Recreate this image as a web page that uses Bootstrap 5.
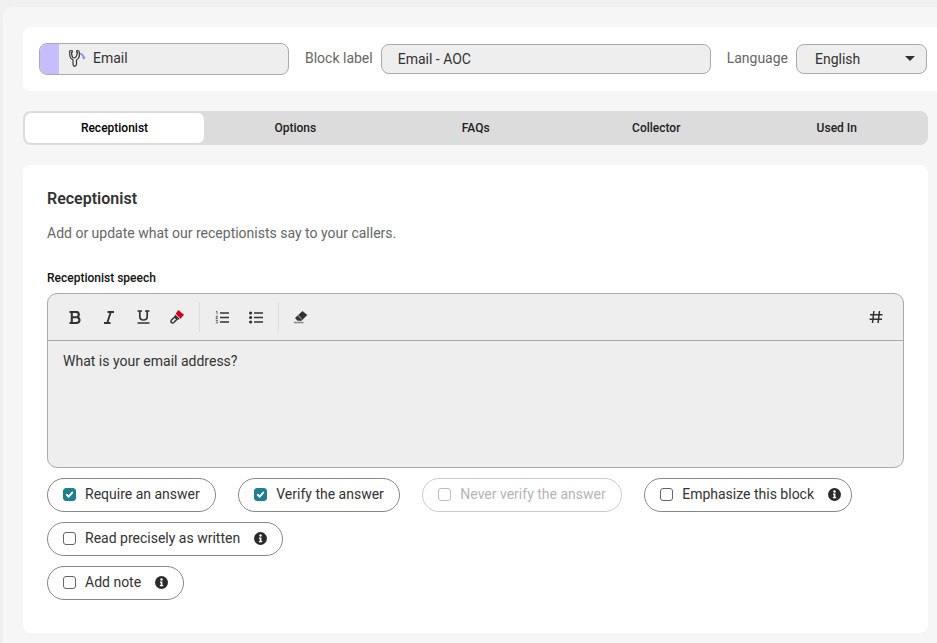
<!DOCTYPE html>
<html lang="en">
<head>
<meta charset="utf-8">
<title>Email block</title>
<link href="https://cdn.jsdelivr.net/npm/bootstrap@5.3.0/dist/css/bootstrap.min.css" rel="stylesheet">
<style>
html,body{height:100%;overflow:hidden}
body{background:#f0f0f0;font-family:Roboto,"Liberation Sans",sans-serif;font-size:14px;color:#333}
.shell{margin:7px 0 0 3px;padding:20px 9px 10px 20px;background:#f6f6f6;border-top-left-radius:10px;height:636px}
.head-panel{background:#fff;border-radius:8px 0 0 8px;height:64px;padding:0 10px 0 16px;margin-right:-9px}
.type-pill{width:250px;height:32px;background:#eee;border:1px solid #aaa;border-radius:8px;overflow:hidden}
.type-swatch{width:20px;height:100%;background:#c6bdfb;margin-left:-1px}
.type-icon{margin:0 7px 2px 9px}
.type-name{margin-bottom:2px}
.field-label{color:#666;margin:0 8px 2px 16px}
.text-box{height:30px;background:#eee;border:1px solid #aaa;border-radius:8px;padding:0 16px;display:flex;align-items:center;color:#333;font-size:14px}
.name-box{width:330px}
.lang-box{width:131px;position:relative;padding-left:18px}
.lang-caret{position:absolute;right:11px;top:11px;width:0;height:0;border:5px solid transparent;border-top:5px solid #333;border-bottom:0}
.tab-strip{height:34px;margin-top:20px;background:#dcdcdc;border-radius:8px;padding:2px 1px 2px 2px}
.tab-item{flex:1 1 0;border:0;background:transparent;border-radius:6px;font-size:12px;font-weight:500;color:#222;padding:0;line-height:1}
.tab-item.on{flex:none;width:179px;margin-right:1px;background:#fff;color:#000}
.main-panel{background:#fff;border-radius:8px;margin-top:20px;height:468px;padding:24px}
.main-title{font-size:16px;font-weight:600;color:#333;line-height:19px;margin:0}
.main-sub{color:#666;line-height:20px;margin:15px 0 0}
.speech-label{font-size:12px;font-weight:500;color:#111;line-height:14px;margin:28px 0 8px;display:block}
.editor{height:175px;background:#eee;border:1px solid #aaa;border-radius:10px;overflow:hidden}
.editor-bar{height:47px;border-bottom:1px solid #aaa;padding:0 10px}
.tool{width:34px;height:30px;border:0;background:transparent;padding:0;display:flex;align-items:center;justify-content:center;color:#333}
.tool-sep{width:1px;height:30px;background:#ddd;margin:0 5px}
.editor-text{padding:10px 15px;line-height:20px;color:#333}
.pill-row{margin-top:10px;column-gap:22.5px}
.pills{margin-top:10px}
.pills .pill-row:first-child{margin-top:0}
.opt-pill{height:34px;border:1px solid #888;border-radius:17px;padding:0 15px 2px;display:inline-flex;align-items:center;color:#333;margin:0}
.opt-pill.tight{padding-right:10px}
.opt-pill .form-check-input{width:13px;height:13px;margin:0 9px 0 0;border:1px solid #666;border-radius:3px;flex:none;float:none}
.opt-pill .form-check-input:checked{border-color:#1f7f90;background-color:#1f7f90;background-image:url("data:image/svg+xml,%3csvg xmlns='http://www.w3.org/2000/svg' viewBox='0 0 20 20'%3e%3cpath fill='none' stroke='%23fff' stroke-linecap='round' stroke-linejoin='round' stroke-width='3.500' d='m5 10.500 3.500 3.500 6.500-7.500'/%3e%3c/svg%3e")}
.opt-pill.off{border-color:#ccc;color:#b5b5b5}
.opt-pill.off .form-check-input{border-color:#bbb;opacity:1;background-color:#fff}
.info-dot{margin-left:14px;flex:none}
</style>
</head>
<body>
<div class="shell">
  <div class="head-panel d-flex align-items-center">
    <div class="type-pill d-flex align-items-center">
      <span class="type-swatch"></span>
      <svg class="type-icon" width="18" height="18" viewBox="0 0 18 18" fill="none"><path d="M11.500 4.500c2.300.4 3.900 2 4.300 4.300" stroke="#8f86e6" stroke-width="1.700"/><path d="M17.600 7.800l-1.500 3-2.200-2.200z" fill="#8f86e6"/><path d="M1.500 2 4 1.500l.5 1.500-1 .5.500 3.500q.5 2 2 2t2.500-2l1-3.500-1-.5.500-1.500 2 .5q1 5-.5 7-1 1.500-2 2v4q0 2-2 2.300-1.500-.3-1.500-2.300v-4.200Q2.500 10 2 7.500z" stroke="#333" stroke-width="1.200" stroke-linejoin="round"/></svg>
      <span class="type-name">Email</span>
    </div>
    <span class="field-label">Block label</span>
    <div class="text-box name-box">Email - AOC</div>
    <span class="field-label">Language</span>
    <div class="text-box lang-box">English<span class="lang-caret"></span></div>
  </div>

  <div class="tab-strip d-flex">
    <button type="button" class="tab-item on">Receptionist</button>
    <button type="button" class="tab-item">Options</button>
    <button type="button" class="tab-item">FAQs</button>
    <button type="button" class="tab-item">Collector</button>
    <button type="button" class="tab-item">Used In</button>
  </div>

  <div class="main-panel">
    <h2 class="main-title">Receptionist</h2>
    <p class="main-sub">Add or update what our receptionists say to your callers.</p>
    <span class="speech-label">Receptionist speech</span>
    <div class="editor">
      <div class="editor-bar d-flex align-items-center">
        <button type="button" class="tool" aria-label="Bold"><svg width="12" height="13" viewBox="0 0 12 13" fill="none"><path d="M.5 1H7c1.800 0 2.800 1 2.800 2.600 0 1.400-.8 2.400-2.300 2.600 1.800.1 3 1.100 3 2.900 0 1.900-1.300 2.900-3.300 2.900H.5M2.800 1v11M2.800 6.300h4.500" stroke="#333" stroke-width="2.100"/></svg></button>
        <button type="button" class="tool" aria-label="Italic"><svg width="12" height="13" viewBox="0 0 12 13" fill="none"><path d="M4.500 1h6.500M1 12h6.500M7.800 1 4.200 12" stroke="#333" stroke-width="1.900"/></svg></button>
        <button type="button" class="tool" aria-label="Underline"><svg width="13" height="14" viewBox="0 0 13 14" fill="none"><path d="M.5 1h4.500M8 1h4.500M2.800 1v5.500C2.800 8.700 4.300 10 6.500 10s3.700-1.300 3.700-3.500V1M.5 13h12" stroke="#333" stroke-width="1.700"/></svg></button>
        <button type="button" class="tool" aria-label="Highlight"><svg width="14" height="14" viewBox="0 0 14 14"><path d="M8.300 0 14 4.800 10.500 8.800 5.700 3.700z" fill="#d0021b"/><path d="M5.400 4.500 9.700 9 8.300 9.800 4.500 6z" fill="#333"/><path d="M4.700 7 7 9.300 3.800 12.500A1.500 1.500 0 0 1 1.500 10z" fill="none" stroke="#333" stroke-width="1.500"/></svg></button>
        <span class="tool-sep"></span>
        <button type="button" class="tool" aria-label="Ordered list"><svg width="14" height="13" viewBox="0 0 14 13" fill="none"><path d="M5 2h9M5 6.500h9M5 11h9" stroke="#333" stroke-width="1.300"/><path d="M1 .7l1-.4v3M.8 5.300h1.800L.9 7.500h1.900M.8 9.300h1.900l-.9 1 .9.900-.2.800H.8" stroke="#333" stroke-width=".7"/></svg></button>
        <button type="button" class="tool" aria-label="Bullet list"><svg width="14" height="13" viewBox="0 0 14 13"><circle cx="1.600" cy="2" r="1.600" fill="#333"/><circle cx="1.600" cy="6.500" r="1.600" fill="#333"/><circle cx="1.600" cy="11" r="1.600" fill="#333"/><path d="M5 2h9M5 6.500h9M5 11h9" stroke="#333" stroke-width="1.500"/></svg></button>
        <span class="tool-sep"></span>
        <button type="button" class="tool" aria-label="Clear formatting"><svg width="14" height="14" viewBox="0 0 14 14"><path d="M8.500 1 13.300 5 7.500 10.800H3.500L1 8z" fill="#333"/><path d="M0 12.500h9.500" stroke="#888" stroke-width="1.300"/><path d="M4 5.500 7.700 9" stroke="#eee" stroke-width=".8"/></svg></button>
        <button type="button" class="tool ms-auto" aria-label="Variable"><svg width="14" height="14" viewBox="0 0 14 14" fill="none"><path d="M4.900 1 3.500 13M10.500 1 9.100 13M1 4.700h12.500M.5 9.300H13" stroke="#333" stroke-width="1.500"/></svg></button>
      </div>
      <div class="editor-text">What is your email address?</div>
    </div>

    <div class="pills">
      <div class="d-flex pill-row">
        <label class="opt-pill"><input class="form-check-input" type="checkbox" checked>Require an answer</label>
        <label class="opt-pill"><input class="form-check-input" type="checkbox" checked>Verify the answer</label>
        <label class="opt-pill off"><input class="form-check-input" type="checkbox" disabled>Never verify the answer</label>
        <label class="opt-pill tight"><input class="form-check-input" type="checkbox">Emphasize this block<svg class="info-dot" width="13" height="13" viewBox="0 0 13 13"><circle cx="6.500" cy="6.500" r="6.500" fill="#2b2b2b"/><circle cx="6.500" cy="3.500" r="1.200" fill="#fff"/><path d="M5 5.600h2.400v3.500h.8v1.100H4.900V9.100h.8V6.700H5z" fill="#fff"/></svg></label>
      </div>
      <div class="d-flex pill-row">
        <label class="opt-pill"><input class="form-check-input" type="checkbox">Read precisely as written<svg class="info-dot" width="13" height="13" viewBox="0 0 13 13"><circle cx="6.500" cy="6.500" r="6.500" fill="#2b2b2b"/><circle cx="6.500" cy="3.500" r="1.200" fill="#fff"/><path d="M5 5.600h2.400v3.500h.8v1.100H4.900V9.100h.8V6.700H5z" fill="#fff"/></svg></label>
      </div>
      <div class="d-flex pill-row">
        <label class="opt-pill"><input class="form-check-input" type="checkbox">Add note<svg class="info-dot" width="13" height="13" viewBox="0 0 13 13"><circle cx="6.500" cy="6.500" r="6.500" fill="#2b2b2b"/><circle cx="6.500" cy="3.500" r="1.200" fill="#fff"/><path d="M5 5.600h2.400v3.500h.8v1.100H4.900V9.100h.8V6.700H5z" fill="#fff"/></svg></label>
      </div>
    </div>
  </div>
</div>
<script src="https://cdn.jsdelivr.net/npm/bootstrap@5.3.0/dist/js/bootstrap.bundle.min.js"></script>
</body>
</html>
